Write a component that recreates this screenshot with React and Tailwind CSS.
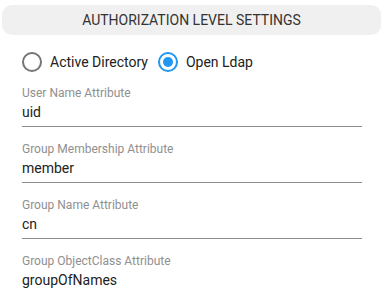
import React from "react";

function Radio({ checked }) {
  return (
    <svg width="24" height="24" viewBox="0 0 24 24">
      <circle cx="12" cy="12" r="9" fill="none" stroke={checked ? "#2196f3" : "#757575"} strokeWidth="2" />
      {checked && <circle cx="12" cy="12" r="5" fill="#2196f3" />}
    </svg>
  );
}

function Field({ label, value, last }) {
  return (
    <div className={last ? "" : "mb-[15px]"}>
      <div className="text-[12px] leading-[14px] text-[#8f8f8f]">{label}</div>
      <div className="mt-[2px] text-[14px] leading-[20px] text-[#212121] pb-[4px] border-b border-[#8c8c8c]">{value}</div>
    </div>
  );
}

export default function App() {
  return (
    <div className="w-[383px] h-[294px] overflow-hidden bg-white" style={{ fontFamily: "Roboto, 'Liberation Sans', sans-serif" }}>
      <div className="mx-[2px] mt-[5px] h-[30px] rounded-[10px] bg-[#f0f0f0] flex items-center justify-center text-[14px] text-[#333333] uppercase">
        Authorization Level Settings
      </div>
      <div className="mt-[15px] pl-[20px] flex items-center h-[24px] text-[14px] text-[#212121]">
        <Radio />
        <span className="ml-[6px]">Active Directory</span>
        <span className="ml-[8px] flex items-center">
          <Radio checked />
        </span>
        <span className="ml-[6px]">Open Ldap</span>
      </div>
      <div className="mt-[12px] ml-[22px] w-[340px]">
        <Field label="User Name Attribute" value="uid" />
        <Field label="Group Membership Attribute" value="member" />
        <Field label="Group Name Attribute" value="cn" />
        <Field label="Group ObjectClass Attribute" value="groupOfNames" last />
      </div>
    </div>
  );
}
